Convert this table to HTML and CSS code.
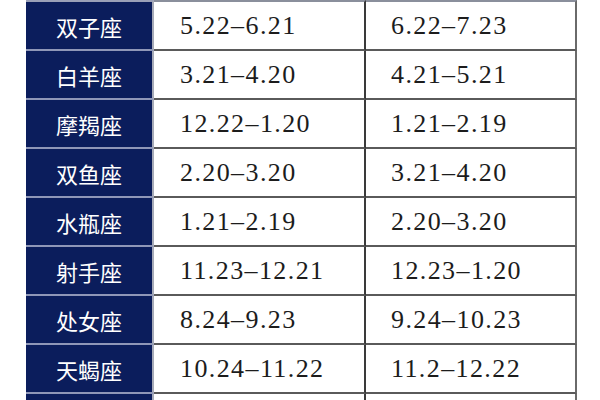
FILE: index.html
```html
<!DOCTYPE html>
<html lang="zh">
<head>
<meta charset="utf-8">
<link rel="stylesheet" href="styles.css">
</head>
<body>
<div class="table">
  <div class="cell name top">双子座</div><div class="cell date top mid">5.22–6.21</div><div class="cell date top last">6.22–7.23</div>
  <div class="cell name">白羊座</div><div class="cell date mid">3.21–4.20</div><div class="cell date last">4.21–5.21</div>
  <div class="cell name">摩羯座</div><div class="cell date mid">12.22–1.20</div><div class="cell date last">1.21–2.19</div>
  <div class="cell name">双鱼座</div><div class="cell date mid">2.20–3.20</div><div class="cell date last">3.21–4.20</div>
  <div class="cell name">水瓶座</div><div class="cell date mid">1.21–2.19</div><div class="cell date last">2.20–3.20</div>
  <div class="cell name">射手座</div><div class="cell date mid">11.23–12.21</div><div class="cell date last">12.23–1.20</div>
  <div class="cell name">处女座</div><div class="cell date mid">8.24–9.23</div><div class="cell date last">9.24–10.23</div>
  <div class="cell name">天蝎座</div><div class="cell date mid">10.24–11.22</div><div class="cell date last">11.2–12.22</div>
  <div class="cell name">&nbsp;</div><div class="cell date mid">&nbsp;</div><div class="cell date last">&nbsp;</div>
</div>
</body>
</html>
```

FILE: styles.css
```css
html, body {
  margin: 0;
  padding: 0;
  background: #ffffff;
  width: 600px;
  height: 400px;
  overflow: hidden;
}

.table {
  display: grid;
  grid-template-columns: 128px 212px 211px;
  grid-template-rows: 51px repeat(8, 49px);
  margin-left: 26px;
  height: 400px;
  overflow: hidden;
}

.cell {
  box-sizing: border-box;
  display: flex;
  align-items: center;
  border-bottom: 2px solid #5a5a5a;
  min-height: 0;
}

.top {
  border-top: 2px solid #8a8f9c;
}

.name {
  background: #0b1d5c;
  color: #ffffff;
  justify-content: center;
  font-family: "Noto Sans CJK SC", "Noto Sans", sans-serif;
  font-size: 22px;
  border-bottom-color: #8f97b8;
  border-right: 2px solid #a7abb8;
  padding-top: 1px;
}

.name.top {
  border-top-color: #9aa0b8;
}

.date {
  background: #ffffff;
  color: #1c1c1c;
  font-family: "Liberation Serif", "Times New Roman", serif;
  font-size: 26px;
  letter-spacing: 1.4px;
  padding-left: 26px;
}

.mid {
  border-right: 2px solid #3a3a3a;
}

.last {
  border-right: 2px solid #6a6a6a;
  padding-left: 25px;
}
```
